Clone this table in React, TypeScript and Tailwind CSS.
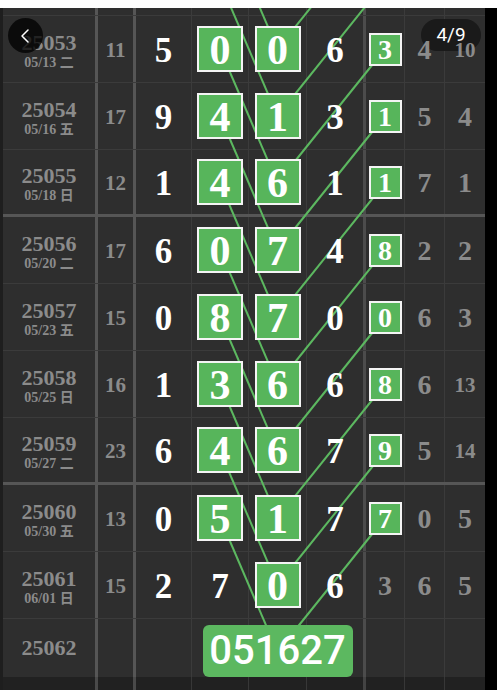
import { ChevronLeft } from "lucide-react";

type Draw = {
  id: string;
  date?: string;
  sum?: string;
  a?: string;
  b?: string;
  c?: string;
  d?: string;
  e?: string;
  f?: string;
  g?: string;
  bBox?: boolean;
  eBox?: boolean;
  thick?: boolean;
};

const draws: Draw[] = [
  { id: "25053", date: "05/13 二", sum: "11", a: "5", b: "0", c: "0", d: "6", e: "3", f: "4", g: "10" },
  { id: "25054", date: "05/16 五", sum: "17", a: "9", b: "4", c: "1", d: "3", e: "1", f: "5", g: "4" },
  { id: "25055", date: "05/18 日", sum: "12", a: "1", b: "4", c: "6", d: "1", e: "1", f: "7", g: "1", thick: true },
  { id: "25056", date: "05/20 二", sum: "17", a: "6", b: "0", c: "7", d: "4", e: "8", f: "2", g: "2" },
  { id: "25057", date: "05/23 五", sum: "15", a: "0", b: "8", c: "7", d: "0", e: "0", f: "6", g: "3" },
  { id: "25058", date: "05/25 日", sum: "16", a: "1", b: "3", c: "6", d: "6", e: "8", f: "6", g: "13" },
  { id: "25059", date: "05/27 二", sum: "23", a: "6", b: "4", c: "6", d: "7", e: "9", f: "5", g: "14", thick: true },
  { id: "25060", date: "05/30 五", sum: "13", a: "0", b: "5", c: "1", d: "7", e: "7", f: "0", g: "5" },
  { id: "25061", date: "06/01 日", sum: "15", a: "2", b: "7", c: "0", d: "6", e: "3", f: "6", g: "5", bBox: false, eBox: false },
];

const serif = { fontFamily: '"Liberation Serif", "Noto Sans CJK SC", serif' };

// column widths include their right border
const cols = [
  "w-[95px] border-r-[3px] border-[#565656]",
  "w-[38px] border-r-[3px] border-[#565656]",
  "w-[56px] border-r border-[#3b3b3b]",
  "w-[57px] border-r border-[#3b3b3b]",
  "w-[58px] border-r border-[#3b3b3b]",
  "w-[59px] border-r-[3px] border-[#4c4c4c]",
  "w-[39px] border-r border-[#3b3b3b]",
  "w-[40px] border-r border-[#3b3b3b]",
  "w-[40px]",
];

const Cell = ({ i, children }: { i: number; children?: React.ReactNode }) => (
  <div className={`${cols[i]} shrink-0 h-full flex items-center justify-center`}>{children}</div>
);

const BigBox = ({ v }: { v: string }) => (
  <div className="relative z-10 w-[46px] h-[46px] bg-[#57b55b] border-2 border-[#f4f4f4] flex items-center justify-center">
    <span className="text-white font-bold text-[42px] leading-none pt-[2px]">{v}</span>
  </div>
);

const SmallBox = ({ v }: { v: string }) => (
  <div className="relative z-10 w-[33px] h-[33px] bg-[#57b55b] border-2 border-[#f4f4f4] flex items-center justify-center">
    <span className="text-white font-bold text-[28px] leading-none pt-[1px]">{v}</span>
  </div>
);

const Plain = ({ v }: { v?: string }) => (
  <span className="relative z-10 text-white font-bold text-[35px] leading-none pt-[3px]">{v}</span>
);

const Grey = ({ v }: { v?: string }) => (
  <span
    className={`relative z-10 text-[#8b8b8b] font-bold leading-none pt-[2px] ${
      v && v.length > 1 ? "text-[21px]" : "text-[28px]"
    }`}
  >
    {v}
  </span>
);

const Row = ({ r }: { r: Draw }) => (
  <div className={`flex h-[67px] shrink-0 ${r.thick ? "border-b-[3px] border-[#565656]" : "border-b border-[#3b3b3b]"}`}>
    <Cell i={0}>
      <div className="flex flex-col items-center pt-[5px] text-[#8b8b8b] font-bold">
        <span className="text-[22px] leading-[22px]">{r.id}</span>
        <span className="text-[14px] leading-[18px]">{r.date}</span>
      </div>
    </Cell>
    <Cell i={1}>
      <span className="text-[#8b8b8b] font-bold text-[21px] leading-none pt-[2px]">{r.sum}</span>
    </Cell>
    <Cell i={2}>
      <Plain v={r.a} />
    </Cell>
    <Cell i={3}>{r.bBox === false ? <Plain v={r.b} /> : <BigBox v={r.b!} />}</Cell>
    <Cell i={4}>
      <BigBox v={r.c!} />
    </Cell>
    <Cell i={5}>
      <Plain v={r.d} />
    </Cell>
    <Cell i={6}>{r.eBox === false ? <Grey v={r.e} /> : <SmallBox v={r.e!} />}</Cell>
    <Cell i={7}>
      <Grey v={r.f} />
    </Cell>
    <Cell i={8}>
      <Grey v={r.g} />
    </Cell>
  </div>
);

const EmptyRow = ({ h, dark }: { h: string; dark?: boolean }) => (
  <div className={`flex shrink-0 ${h} ${dark ? "bg-[#1c1c1c] opacity-70" : "border-b border-[#3b3b3b]"}`}>
    {cols.map((_, i) => (
      <Cell key={i} i={i} />
    ))}
  </div>
);

// lines run from col 4 and col 7 of a draw to col 5 two draws later
const Links = () => {
  const y = (i: number) => 41 + 67 * i;
  const segs: [number, number, number, number][] = [];
  for (let t = 0; t < 10; t++) {
    segs.push([217, y(t - 2), 274.5, y(t)]);
    segs.push([382, y(t - 2), 274.5, y(t)]);
  }
  return (
    <svg className="absolute left-0 top-0 pointer-events-none" width={482} height={682}>
      {segs.map(([x1, y1, x2, y2], k) => (
        <line key={k} x1={x1} y1={y1} x2={x2} y2={y2} stroke="#5cb860" strokeWidth={2} />
      ))}
    </svg>
  );
};

export default function App() {
  return (
    <div className="relative w-[497px] h-[690px] overflow-hidden bg-black" style={serif}>
      <div className="h-[8px] bg-white" />
      <div className="flex h-[682px]">
        <div className="w-[3px] bg-[#1e1e1e]" />
        <div className="relative w-[482px] flex flex-col bg-[#2e2e2e]">
          <Links />
          <EmptyRow h="h-[8px]" />
          {draws.map((r) => (
            <Row key={r.id} r={r} />
          ))}
          <div className="flex h-[58px] shrink-0">
            <Cell i={0}>
              <span className="text-[#8b8b8b] font-bold text-[22px] leading-none">25062</span>
            </Cell>
            <Cell i={1} />
            <Cell i={2} />
            <Cell i={3} />
            <div className={`${cols[4]} shrink-0 h-full flex items-end justify-center`}>
              <div
                className="relative z-10 shrink-0 w-[150px] h-[52px] rounded-[6px] bg-[#5cb860] flex items-center justify-center text-white text-[40px] font-medium leading-none"
                style={{ fontFamily: "Roboto, sans-serif" }}
              >
                051627
              </div>
            </div>
            <Cell i={5} />
            <Cell i={6} />
            <Cell i={7} />
            <Cell i={8} />
          </div>
          <EmptyRow h="h-[13px]" dark />
        </div>
        <div className="w-[12px] bg-black" />
      </div>

      <button className="absolute left-[8px] top-[18px] w-[35px] h-[35px] rounded-full bg-black/75 flex items-center justify-center">
        <ChevronLeft size={24} strokeWidth={1.5} className="text-white -ml-[2px]" />
      </button>
      <div
        className="absolute left-[421px] top-[19px] w-[60px] h-[32px] rounded-full bg-[#161616]/85 flex items-center justify-center text-white text-[19px]"
        style={{ fontFamily: "Roboto, sans-serif" }}
      >
        4/9
      </div>
    </div>
  );
}
